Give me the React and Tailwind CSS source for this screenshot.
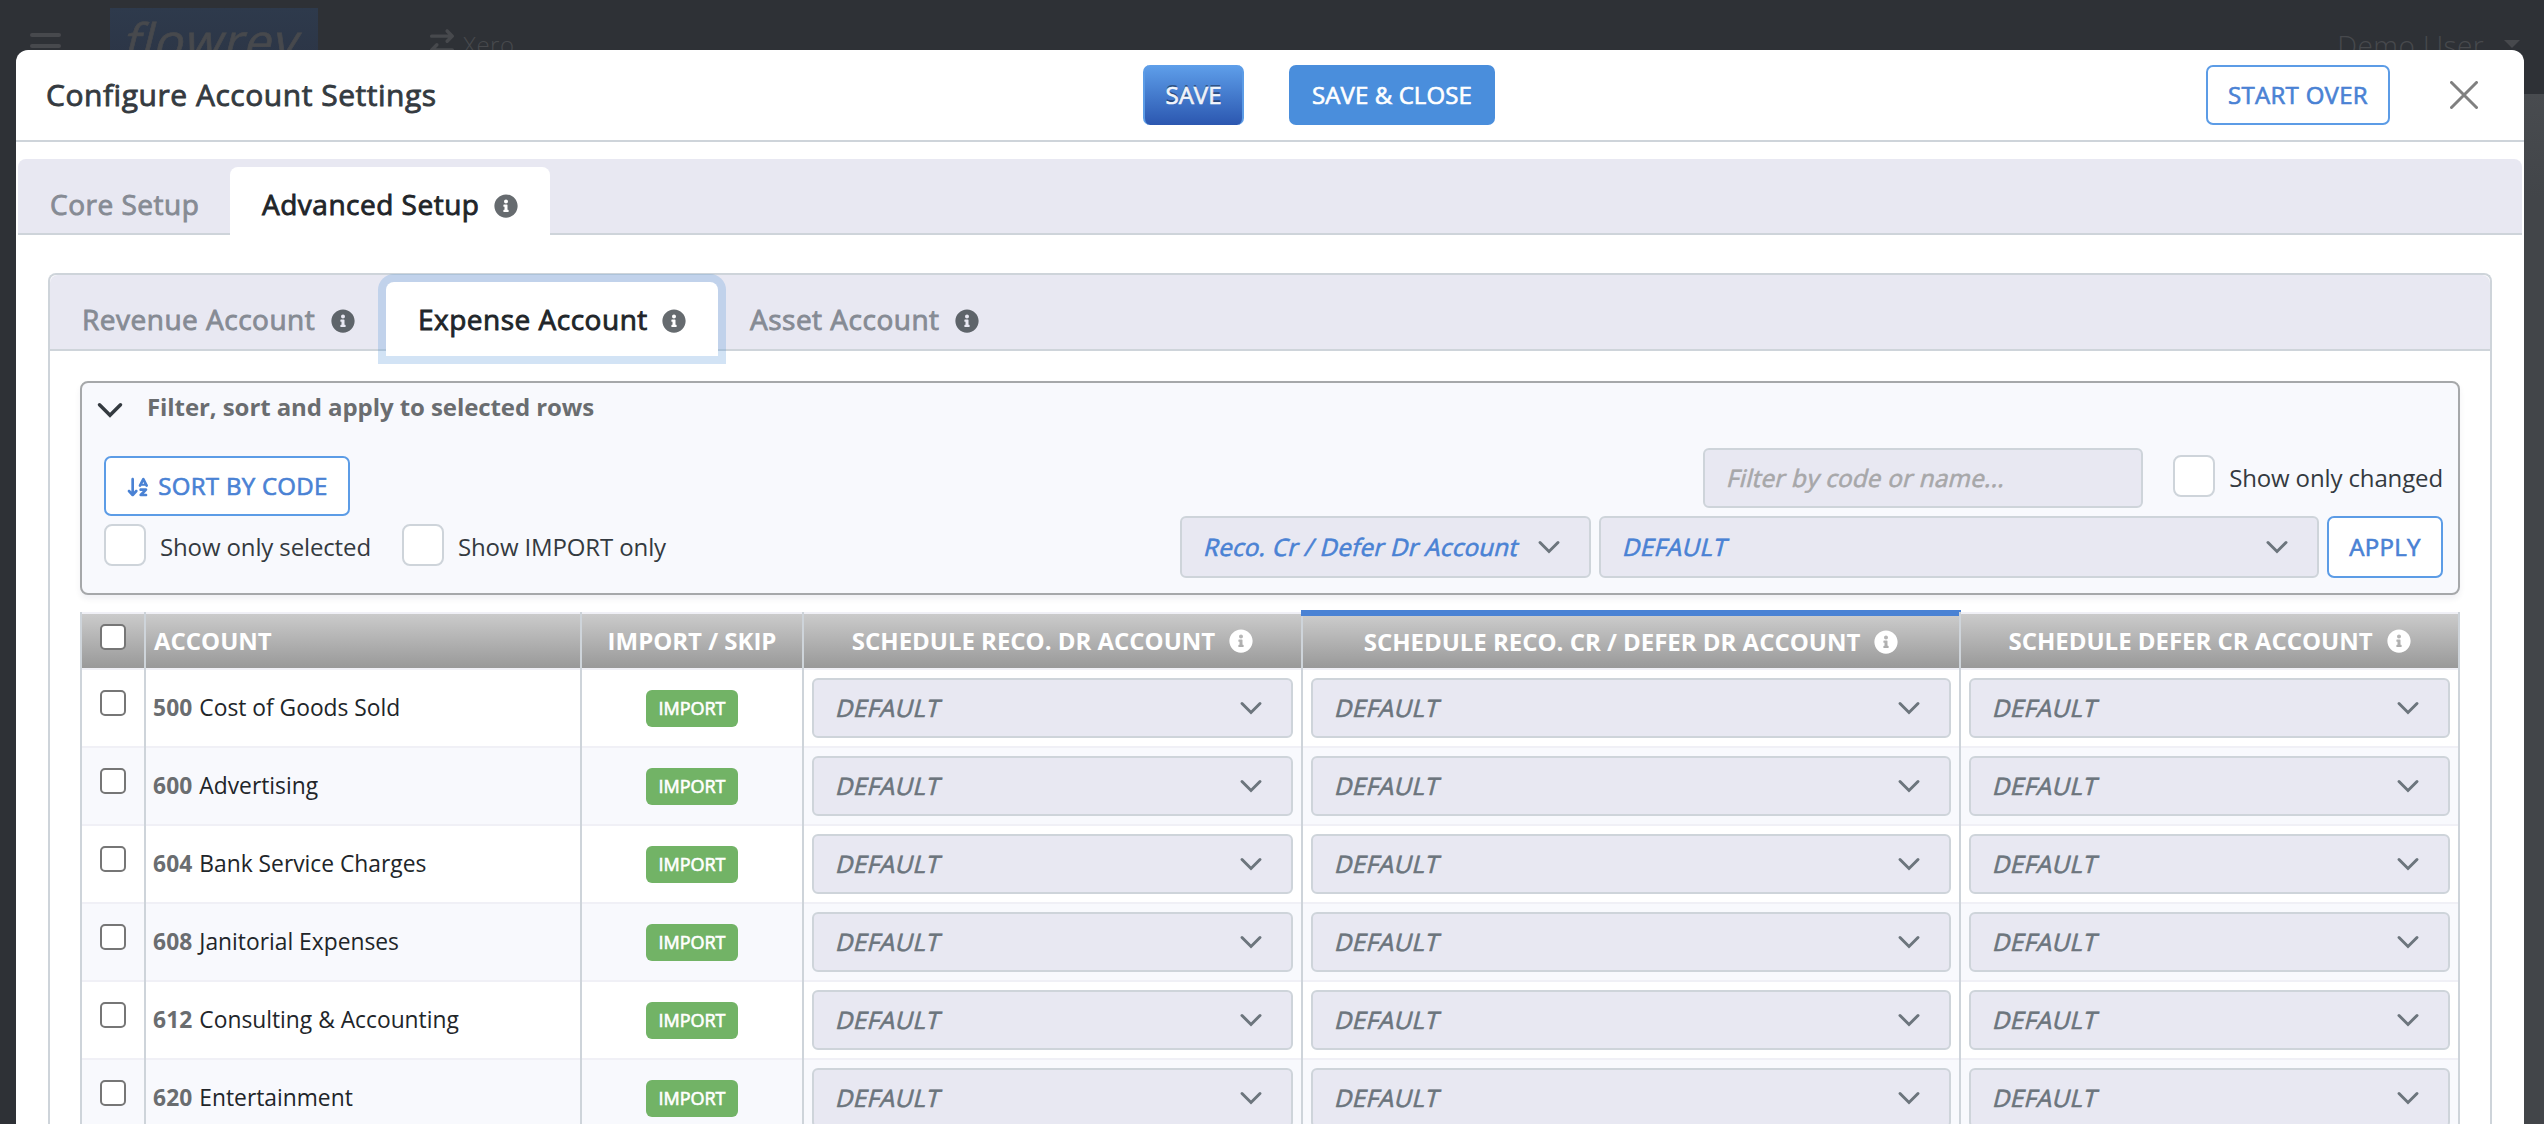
import { FaInfoCircle } from "react-icons/fa";
import { FaArrowDownAZ, FaArrowRightArrowLeft } from "react-icons/fa6";

const GRID = "grid grid-cols-[64px_436px_222px_499px_658px_501px]";
const MEDIUM = "[-webkit-text-stroke:0.65px_currentColor]";
const MEDIUM_LARGE = "[-webkit-text-stroke:0.85px_currentColor]";

const ACCOUNTS = [
  ["500", "Cost of Goods Sold"],
  ["600", "Advertising"],
  ["604", "Bank Service Charges"],
  ["608", "Janitorial Expenses"],
  ["612", "Consulting & Accounting"],
  ["620", "Entertainment"],
];

function Chevron({ className }) {
  return (
    <svg viewBox="0 0 16 16" fill="none" stroke="currentColor" strokeWidth="2" strokeLinecap="round" strokeLinejoin="miter" className={className}>
      <path d="M2 5l6 6 6-6" />
    </svg>
  );
}

function Oblique({ children, className = "" }) {
  return <span className={`inline-block origin-[0_76%] skew-x-[-14deg] whitespace-nowrap ${className}`}>{children}</span>;
}

function Select({ children, className = "" }) {
  return (
    <div className={`flex items-center justify-between rounded-[6px] border-2 border-[#ced4da] bg-[#e8e8f2] pl-[21px] pr-[28px] ${className}`}>
      <Oblique className={`mb-[2px] tracking-[0.32px] ${MEDIUM}`}>{children}</Oblique>
      <Chevron className="size-6 shrink-0 text-[#6c757d]" />
    </div>
  );
}

function OutlineButton({ children, className = "" }) {
  return (
    <button className={`flex items-center justify-center rounded-[7px] border-2 border-[#5c9ce6] bg-white pb-[2px] tracking-[0.3px] text-[#4a82d4] ${MEDIUM} ${className}`}>
      {children}
    </button>
  );
}

function SwitchBox({ label, className = "" }) {
  return (
    <label className={`flex items-start ${className}`}>
      <span className="size-[42px] shrink-0 rounded-[8px] border-2 border-[#ced4da] bg-white" />
      <span className="ml-[14px] mt-[6px] whitespace-nowrap leading-[33px] tracking-[-0.13px] text-[#343a40]">{label}</span>
    </label>
  );
}

function CheckBox() {
  return <span className="block size-[26px] rounded-[5px] border-2 border-[#767676] bg-white" />;
}

function HeadCell({ children, info, active, className = "" }) {
  return (
    <div className={`relative flex border-l-2 border-[#ced4da] ${className}`}>
      <div
        className={`flex flex-1 items-center border-b-2 border-[#f0f0f6] bg-clip-padding bg-linear-to-b from-[#cbcbcb] to-[#999999] font-bold tracking-[-0.02px] text-white ${
          active ? "mt-[4px] pb-[1px]" : "border-t-2 pb-[1px]"
        } ${info ? "justify-center" : ""}`}
      >
        {children}
        {info && <FaInfoCircle className="ml-[14px] size-6" />}
      </div>
      {active && <div className="absolute -left-[2px] -right-[2px] -top-[2px] h-[6px] bg-[#4a82d4]" />}
    </div>
  );
}

function Cell({ children, className = "" }) {
  return (
    <div className={`flex border-l-2 border-[#ced4da] ${className}`}>
      <div className="flex h-[78px] min-w-0 flex-1 border-b-2 border-[#f0f0f6]">{children}</div>
    </div>
  );
}

function Tab({ children, info, className, iconClass = "text-[#5e646a]" }) {
  return (
    <div className={`flex items-center justify-between rounded-t-[8px] px-[32px] text-[28px] leading-[38px] tracking-[0.5px] ${MEDIUM_LARGE} ${className}`}>
      <span className="mb-[4px] whitespace-nowrap">{children}</span>
      {info && <FaInfoCircle className={`size-6 shrink-0 [stroke-width:0] ${iconClass}`} />}
    </div>
  );
}

export default function App() {
  return (
    <div className="relative h-[1124px] w-[2544px] overflow-hidden bg-[#2e3136] font-['Open_Sans',sans-serif] text-[24px] leading-[33px]">
      {/* Dimmed page behind the dialog */}
      <header className="flex h-[94px] items-start text-[#47494d]">
        <div className="ml-[30px] mt-[33px] flex w-[31px] flex-col gap-[7px]">
          <span className="h-[4px] rounded-full bg-[#47494d]" />
          <span className="h-[4px] rounded-full bg-[#47494d]" />
          <span className="h-[4px] rounded-full bg-[#47494d]" />
        </div>
        <div className="ml-[49px] mt-[8px] h-[80px] w-[208px] bg-linear-to-b from-[#2e3a4c] to-[#2b3343]">
          <Oblique className={`ml-[12px] -mt-[1px] text-[49px] leading-[66px] tracking-[0.9px] ${MEDIUM}`}>flowrey</Oblique>
        </div>
        <FaArrowRightArrowLeft className="ml-[112px] mt-[29px] h-[28px] w-[24px]" />
        <span className="ml-[9px] mt-[28px] font-light tracking-[0.5px]">Xero</span>
        <span className="ml-auto mt-[26px] text-[28px] font-light leading-[38px] tracking-[0.4px]">Demo User</span>
        <span className="ml-[20px] mr-[24px] mt-[40px] border-x-[8px] border-t-[8px] border-x-transparent border-t-[#47494d]" />
      </header>
      <div className="ml-auto h-[1030px] w-[100px] bg-linear-to-b from-[#484b4f] to-[#424549] to-10%" />

      {/* Dialog */}
      <div className="absolute bottom-0 left-[16px] right-[20px] top-[50px] flex flex-col rounded-t-[12px] bg-white">
        <div className="flex h-[92px] shrink-0 items-center border-b-2 border-[#ced4da]">
          <h1 className={`ml-[30px] w-[1097px] text-[30px] leading-[40px] tracking-[0.53px] text-[#343a40] ${MEDIUM_LARGE}`}>Configure Account Settings</h1>
          <button
            className={`h-[60px] w-[101px] rounded-[7px] border-x-2 border-[#5c9ce6] bg-linear-to-b from-[#5f9fea] to-[#2c57b0] pb-[2px] text-white/90 [text-shadow:0_-2px_0_rgba(0,0,0,0.4)] ${MEDIUM}`}
          >
            SAVE
          </button>
          <button className={`ml-[45px] h-[60px] w-[206px] rounded-[7px] bg-[#4a8edc] pb-[2px] tracking-[0.1px] text-white ${MEDIUM}`}>SAVE &amp; CLOSE</button>
          <OutlineButton className="ml-auto h-[60px] w-[184px]">START OVER</OutlineButton>
          <svg viewBox="0 0 28 28" className="ml-[60px] mr-[46px] size-7" fill="none" stroke="#808080" strokeWidth="3" strokeLinecap="round">
            <path d="M1.5 1.5l25 25M26.5 1.5l-25 25" />
          </svg>
        </div>

        {/* Main tabs */}
        <nav className="mx-[2px] mt-[17px] flex h-[76px] shrink-0 items-end rounded-t-[8px] border-b-2 border-[#ced4da] bg-[#e8e8f2]">
          <Tab className="-mb-[2px] h-[68px] w-[212px] pt-[10px] text-[#868b94]">Core Setup</Tab>
          <Tab info className="-mb-[2px] h-[68px] w-[320px] bg-white pt-[10px] text-[#212529]" iconClass="text-[#666b6f]">
            Advanced Setup
          </Tab>
        </nav>

        {/* Account type panel */}
        <section className="ml-[32px] mr-[32px] mt-[38px] flex min-h-0 flex-1 flex-col rounded-t-[8px] border-2 border-b-0 border-[#ced4da]">
          <nav className="flex h-[76px] shrink-0 items-end rounded-t-[8px] border-b-2 border-[#ced4da] bg-[#e8e8f2]">
            <Tab info className="-mb-[2px] h-[76px] w-[336px] pr-[31px] pt-[15px] text-[#868b94]">
              Revenue Account
            </Tab>
            <Tab info className="-mb-[7px] h-[74px] w-[332px] bg-white pt-[4px] text-[#212529] shadow-[0_0_0_8px_rgba(74,144,217,0.25)]" iconClass="text-[#666b6f]">
              Expense Account
            </Tab>
            <Tab info className="-mb-[2px] h-[76px] w-[293px] pt-[15px] text-[#868b94]">
              Asset Account
            </Tab>
          </nav>

          {/* Filter box */}
          <div className="ml-[30px] mr-[30px] mt-[30px] h-[214px] shrink-0 rounded-[8px] border-2 border-[#a6a8aa] bg-[#f8f9fd] shadow-[0_4px_6px_rgba(0,0,60,0.06)]">
            <div className="flex h-[51px] items-center pl-[14px]">
              <Chevron className="mt-[2px] size-7 text-[#343a40]" />
              <h2 className="mb-[4px] ml-[23px] font-bold tracking-[-0.08px] text-[#6a6d70]">Filter, sort and apply to selected rows</h2>
            </div>
            <div className="flex justify-between pl-[22px] pr-[15px]">
              <div className="mt-[22px]">
                <OutlineButton className="h-[60px] w-[246px]">
                  <FaArrowDownAZ className="mr-[8px] mt-[3px] h-[22px] w-[24px] [stroke-width:0]" />
                  SORT BY CODE
                </OutlineButton>
                <div className="mt-[8px] flex">
                  <SwitchBox label="Show only selected" className="w-[298px]" />
                  <SwitchBox label="Show IMPORT only" />
                </div>
              </div>
              <div className="mt-[14px]">
                <div className="flex justify-end">
                  <div className="flex h-[60px] w-[440px] items-center rounded-[6px] border-2 border-[#ced4da] bg-[#e8e8f2] pl-[21px] text-[#a7a7a9]">
                    <Oblique className={`mb-[1px] tracking-[0.36px] ${MEDIUM}`}>Filter by code or name...</Oblique>
                  </div>
                  <SwitchBox label="Show only changed" className="ml-[30px] mt-[7px]" />
                </div>
                <div className="mt-[8px] flex justify-end gap-[8px]">
                  <Select className="h-[62px] w-[411px] text-[#4a82d4]">Reco. Cr / Defer Dr Account</Select>
                  <Select className="h-[62px] w-[720px] text-[#4a82d4]">DEFAULT</Select>
                  <OutlineButton className="h-[62px] w-[116px]">APPLY</OutlineButton>
                </div>
              </div>
            </div>
          </div>

          {/* Accounts table */}
          <div className="ml-[30px] mt-[17px] w-[2380px]">
            <div className={`${GRID} h-[58px]`}>
              <HeadCell>
                <div className="mb-[7px] ml-[18px]">
                  <CheckBox />
                </div>
              </HeadCell>
              <HeadCell>
                <span className="ml-[8px]">ACCOUNT</span>
              </HeadCell>
              <HeadCell>
                <span className="mx-auto">IMPORT / SKIP</span>
              </HeadCell>
              <HeadCell info>SCHEDULE RECO. DR ACCOUNT</HeadCell>
              <HeadCell info active>
                SCHEDULE RECO. CR / DEFER DR ACCOUNT
              </HeadCell>
              <HeadCell info className="border-r-2">
                SCHEDULE DEFER CR ACCOUNT
              </HeadCell>
            </div>
            {ACCOUNTS.map(([code, name]) => (
              <div key={code} className={`${GRID} odd:bg-[#f8f9fd] even:bg-white`}>
                <Cell>
                  <div className="ml-[18px] mt-[20px]">
                    <CheckBox />
                  </div>
                </Cell>
                <Cell>
                  <p className="ml-[7px] mt-[21px] text-[22.8px] text-[#212529]">
                    <b className="mr-[1px] tracking-[0.1px] text-[#6a6d70]">{code}</b> {name}
                  </p>
                </Cell>
                <Cell>
                  <span className={`mx-auto mt-[20px] h-[37px] w-[92px] rounded-[6px] bg-[#72b366] text-center text-[18px] leading-[36px] text-white ${MEDIUM}`}>IMPORT</span>
                </Cell>
                <Cell>
                  <Select className="m-[8px] flex-1 text-[#6c757d]">DEFAULT</Select>
                </Cell>
                <Cell>
                  <Select className="m-[8px] flex-1 text-[#6c757d]">DEFAULT</Select>
                </Cell>
                <Cell className="border-r-2">
                  <Select className="m-[8px] flex-1 text-[#6c757d]">DEFAULT</Select>
                </Cell>
              </div>
            ))}
          </div>
        </section>
      </div>
    </div>
  );
}
